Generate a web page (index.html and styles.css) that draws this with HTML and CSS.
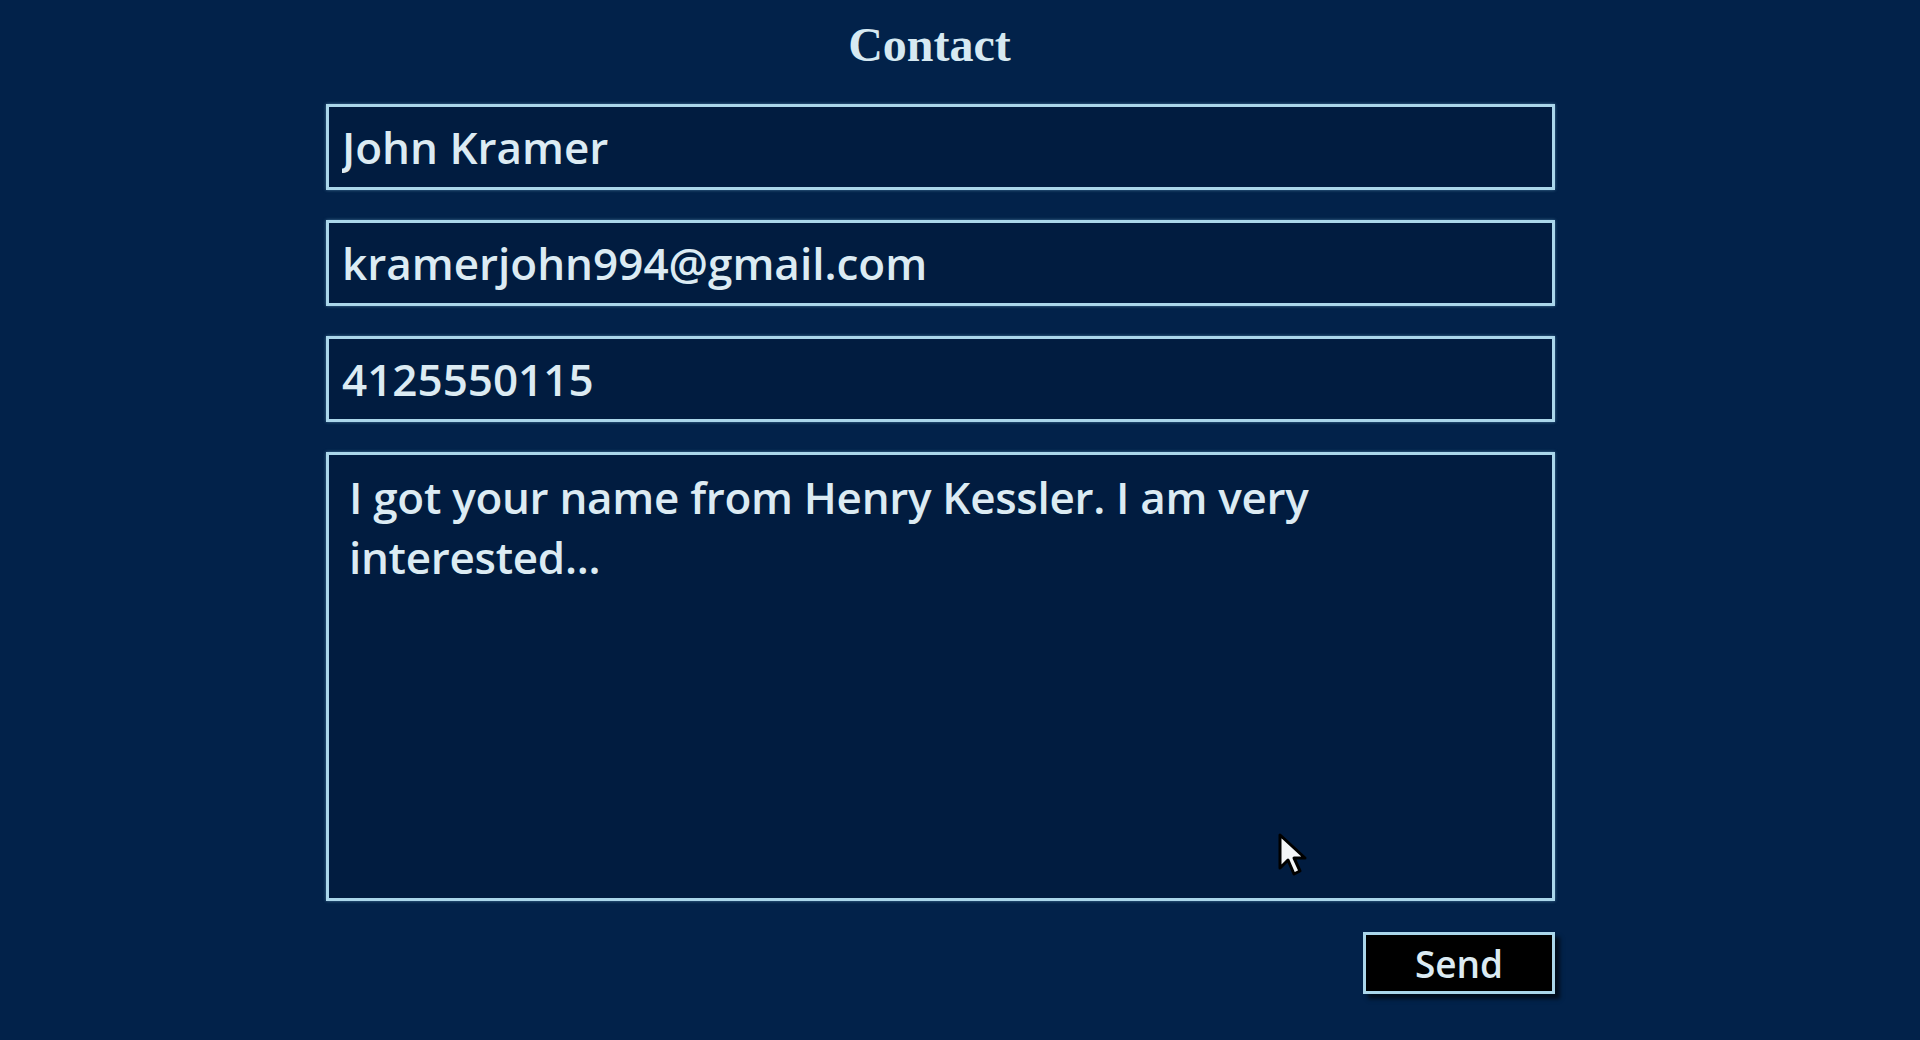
FILE: index.html
```html
<!DOCTYPE html>
<html lang="en">
<head>
  <meta charset="UTF-8">
  <title>Contact</title>
  <link rel="stylesheet" href="styles.css">
</head>
<body>
  <div class="page">
    <h1 class="title">Contact</h1>
    <form class="contact-form" onsubmit="return false">
      <input class="field" type="text" value="John Kramer">
      <input class="field" type="text" value="kramerjohn994@gmail.com">
      <input class="field" type="text" value="4125550115">
      <textarea class="field message">I got your name from Henry Kessler. I am very interested...</textarea>
      <div class="actions">
        <button class="send" type="submit">Send</button>
      </div>
    </form>
    <svg class="pointer" width="32" height="48" viewBox="0 0 32 48">
      <path d="M3 3 L3 36 L11 28 L17 42 L23 39 L17 26 L28 26 Z" fill="#f4f6f8" stroke="#000" stroke-width="3" stroke-linejoin="round"/>
    </svg>
  </div>
</body>
</html>
```

FILE: styles.css
```css
body {
  margin: 0;
  background-color: #02224a; /* deep navy */
  color: #dcebf3;
  font-family: 'Open Sans', 'Noto Sans', sans-serif;
  height: 1040px;
  overflow: hidden;
}
.page {
  position: relative;
  width: 1229px;
  margin-left: 326px;
}
.title {
  margin: 0;
  padding-top: 15px;
  height: 104px;
  box-sizing: border-box;
  text-align: center;
  font-family: 'Liberation Serif', serif;
  font-weight: bold;
  font-size: 48px;
  line-height: 60px;
  color: #d6e9f2;
  padding-right: 22px;
}
.contact-form {
  display: flex;
  flex-direction: column;
  gap: 30px;
}
.field {
  box-sizing: border-box;
  width: 100%;
  height: 86px;
  margin: 0;
  padding: 0 13px;
  border: 3px solid #aad6ea;
  background-color: #011c40;
  color: #dcebf3;
  font-family: 'Open Sans', 'Noto Sans', sans-serif;
  font-weight: 600;
  font-size: 44px;
  outline: none;
  box-shadow: 0 0 3px rgba(140, 200, 230, 0.5);
}
.message {
  height: 449px;
  padding: 12px 20px;
  line-height: 60px;
  letter-spacing: -0.3px;
  resize: none;
  overflow: hidden;
}
.actions {
  display: flex;
  justify-content: flex-end;
  margin-top: 1px;
}
.send {
  width: 192px;
  height: 62px;
  border: 3px solid #aad6ea;
  background-color: #000;
  color: #dcebf3;
  font-family: 'Open Sans', 'Noto Sans', sans-serif;
  font-weight: 600;
  font-size: 37px;
  padding: 0;
  box-shadow: 5px 5px 4px rgba(0, 0, 0, 0.6);
  cursor: pointer;
}
.pointer {
  position: absolute;
  left: 951px;
  top: 832px;
}
```
